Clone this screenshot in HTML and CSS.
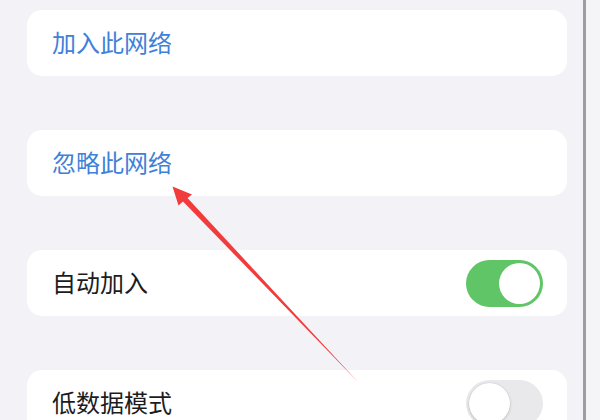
FILE: index.html
```html
<!DOCTYPE html>
<html lang="zh">
<head>
<meta charset="utf-8">
<link rel="stylesheet" href="styles.css">
</head>
<body>
<div class="screen">
  <div class="list">
    <div class="card"><span class="label link">加入此网络</span></div>
    <div class="card"><span class="label link">忽略此网络</span></div>
    <div class="card"><span class="label">自动加入</span><span class="toggle on"><span class="knob"></span></span></div>
    <div class="card"><span class="label">低数据模式</span><span class="toggle off"><span class="knob"></span></span></div>
  </div>
  <div class="scrollbar"></div>
  <div class="edge"></div>
  <svg class="arrow" width="600" height="420" viewBox="0 0 600 420">
    <polygon points="172.5,186.5 192,194.5 187.5,198 358,382 183,201.5 178.5,205.5" fill="#f23c3c"/>
  </svg>
</div>
</body>
</html>
```

FILE: styles.css
```css
html, body {
  margin: 0;
  padding: 0;
}
body {
  background: #f2f2f7;
  font-family: "Noto Sans CJK SC", "Noto Sans", sans-serif;
}
.screen {
  position: relative;
  width: 600px;
  height: 420px;
  overflow: hidden;
  display: flex;
}
.list {
  width: 540px;
  padding: 10px 16px 0 27px;
  display: flex;
  flex-direction: column;
  gap: 54px;
}
.card {
  flex: none;
  height: 66px;
  background: #ffffff;
  border-radius: 15px;
  display: flex;
  align-items: center;
  justify-content: space-between;
  padding: 0 24px 0 25px;
}
.label {
  font-size: 24px;
  line-height: 1;
  color: #1c1c1e;
  margin-bottom: 3px;
}
.label.link {
  color: #3f80d8;
}
.toggle {
  position: relative;
  width: 77px;
  height: 47px;
  border-radius: 24px;
  flex: none;
}
.toggle.on {
  background: #5fc566;
}
.toggle.off {
  background: #e9e9eb;
}
.knob {
  position: absolute;
  top: 3px;
  width: 41px;
  height: 41px;
  border-radius: 50%;
  background: #ffffff;
}
.toggle.on .knob {
  right: 3px;
}
.toggle.off .knob {
  left: 3px;
  box-shadow: 0 1px 3px rgba(0,0,0,0.18), 0 0 0 0.5px rgba(0,0,0,0.06);
}
.scrollbar {
  width: 3px;
  flex: none;
  background: #9d9da1;
}
.edge {
  flex: 1;
  background: #f5f5f8;
}
.arrow {
  position: absolute;
  left: 0;
  top: 0;
  pointer-events: none;
}
```
